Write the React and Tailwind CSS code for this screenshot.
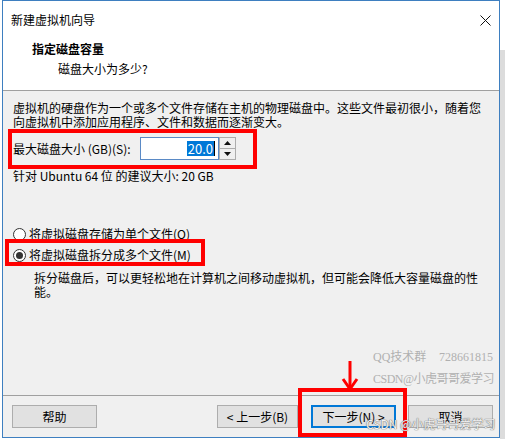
import React from 'react';

const Radio = ({ checked }) => (
  <span className="w-[13px] h-[13px] rounded-full border border-[#333333] bg-white flex items-center justify-center shrink-0">
    {checked && <span className="w-[7px] h-[7px] rounded-full bg-[#333333]"></span>}
  </span>
);

const Button = ({ children, width, primary }) => (
  <div
    className={`h-[23px] flex items-center justify-center bg-[#e1e1e1] ${width} ${
      primary ? 'border-2 border-[#0078d7]' : 'border border-[#adadad]'
    }`}
  >
    {children}
  </div>
);

const App = () => {
  return (
    <div className="w-[505px] h-[439px] bg-white flex overflow-hidden font-['Noto_Sans_CJK_SC',sans-serif] text-[12px] text-black">
      <div className="ml-[2px] w-[498px] h-[438px] border border-[#3e7fc0] flex flex-col relative bg-[#f0f0f0] shrink-0">
        {/* Title bar + header */}
        <div className="bg-white h-[90px] border-b border-[#a0a0a0] flex flex-col shrink-0">
          <div className="h-[38px] flex items-center justify-between pl-[8px] pr-[8px]">
            <span className="leading-[16px]">新建虚拟机向导</span>
            <svg width="11" height="11" viewBox="0 0 11 11">
              <path d="M0.5 0.5 L10.5 10.5 M10.5 0.5 L0.5 10.5" stroke="#111" strokeWidth="1" fill="none" />
            </svg>
          </div>
          <div className="pl-[29px] font-bold leading-[20px]">指定磁盘容量</div>
          <div className="pl-[55px] leading-[20px]">磁盘大小为多少?</div>
        </div>

        {/* Body */}
        <div className="flex-1 flex flex-col pl-[10px] pr-[6px] pt-[10px]">
          <p className="leading-[14px]">
            虚拟机的硬盘作为一个或多个文件存储在主机的物理磁盘中。这些文件最初很小，随着您
            <br />
            向虚拟机中添加应用程序、文件和数据而逐渐变大。
          </p>

          <div className="mt-[8px] h-[23px] flex items-center">
            <span className="w-[127px] leading-[14px]">最大磁盘大小 (GB)(S):</span>
            <div className="w-[79px] h-[23px] bg-white border border-[#5a8ac6] flex items-center justify-end pr-[3px]">
              <span className="bg-[#0078d7] text-white leading-[15px] text-[13px] px-[1px]">20.0</span>
              <span className="w-[1px] h-[15px] bg-black"></span>
            </div>
            <div className="w-[17px] h-[23px] flex flex-col border border-[#adadad] bg-[#f0f0f0]">
              <div className="flex-1 flex items-center justify-center border-b border-[#adadad]">
                <svg width="7" height="4" viewBox="0 0 7 4">
                  <path d="M3.5 0 L7 4 L0 4 Z" fill="#111" />
                </svg>
              </div>
              <div className="flex-1 flex items-center justify-center">
                <svg width="7" height="4" viewBox="0 0 7 4">
                  <path d="M0 0 L7 0 L3.5 4 Z" fill="#111" />
                </svg>
              </div>
            </div>
          </div>

          <p className="mt-[9px] leading-[14px]">针对 Ubuntu 64 位 的建议大小: 20 GB</p>

          <div className="mt-[41px] h-[20px] flex items-center gap-[3px]">
            <Radio />
            <span>将虚拟磁盘存储为单个文件(O)</span>
          </div>
          <div className="mt-[1px] h-[20px] flex items-center gap-[3px]">
            <Radio checked />
            <span>将虚拟磁盘拆分成多个文件(M)</span>
          </div>
          <p className="mt-[6px] pl-[21px] leading-[14px]">
            拆分磁盘后，可以更轻松地在计算机之间移动虚拟机，但可能会降低大容量磁盘的性
            <br />
            能。
          </p>

          <div className="mt-auto self-end pb-[5px] text-[#b0b0b0] text-[12px] font-['Liberation_Serif','Noto_Sans_CJK_SC',serif] leading-[22px] whitespace-nowrap">
            <div className="flex justify-between w-[120px]">
              <span>QQ技术群</span>
              <span>728661815</span>
            </div>
            <div className="w-[120px] tracking-[-0.5px]">CSDN@小虎哥哥爱学习</div>
          </div>
        </div>

        {/* Footer */}
        <div className="h-[42px] border-t border-[#a0a0a0] flex items-start pt-[9px] pl-[9px] pr-[6px] shrink-0">
          <Button width="w-[85px]">帮助</Button>
          <div className="flex-1"></div>
          <Button width="w-[81px]">&lt; 上一步(B)</Button>
          <div className="w-[13px]"></div>
          <Button width="w-[85px]" primary>下一步(N) &gt;</Button>
          <div className="w-[12px]"></div>
          <Button width="w-[85px]">取消</Button>
        </div>

        {/* Annotations */}
        <div className="absolute left-[5px] top-[128px] w-[249px] h-[40px] border-4 border-[#ff0000]"></div>
        <div className="absolute left-[2px] top-[238px] w-[200px] h-[27px] border-4 border-[#ff0000]"></div>
        <div className="absolute left-[295px] top-[387px] w-[109px] h-[49px] border-4 border-[#ff0000]"></div>
        <svg className="absolute left-[338px] top-[360px]" width="18" height="30" viewBox="0 0 18 30">
          <path d="M9 0 L9 28" stroke="#ff0000" strokeWidth="3" />
          <path d="M2 18 L9 28 L16 18" stroke="#ff0000" strokeWidth="3" fill="none" />
        </svg>
        <div className="absolute left-[363px] top-[414px] text-[12px] leading-[18px] whitespace-nowrap text-[#f4f4f4] [text-shadow:0_0_1px_#666,0_0_1px_#666]">
          CSDN @小虎哥哥爱学习
        </div>
      </div>
      <div className="flex-1 flex flex-col">
        <div className="h-[50px] bg-white"></div>
        <div className="flex-1 bg-[#dcdcdc]"></div>
      </div>
    </div>
  );
};

export default App;
